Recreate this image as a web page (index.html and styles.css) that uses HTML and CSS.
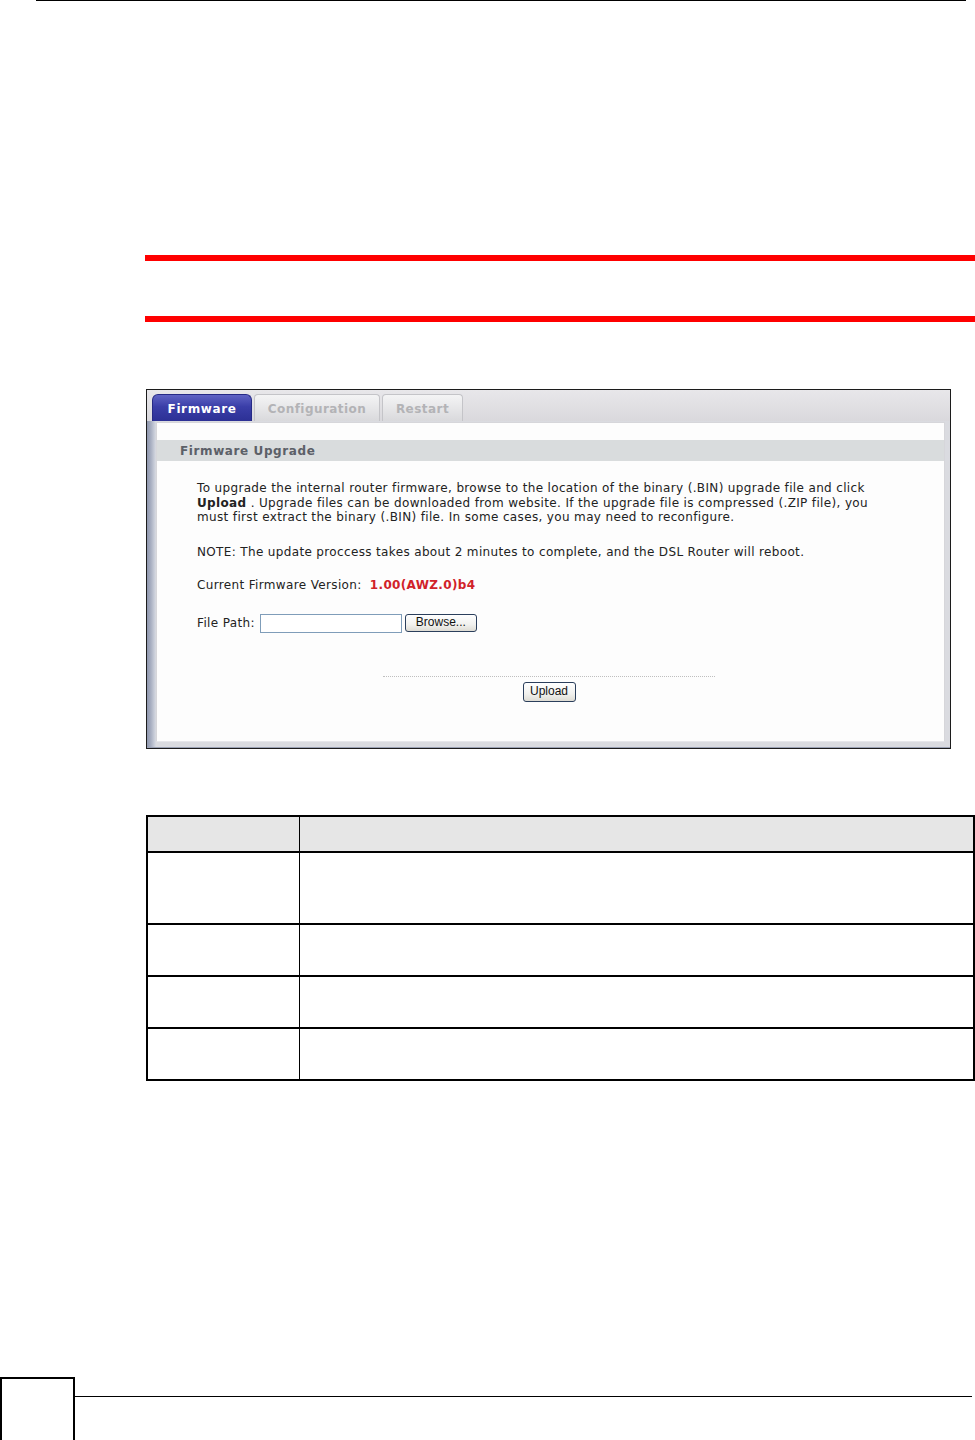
FILE: index.html
```html
<!DOCTYPE html>
<html>
<head>
<meta charset="utf-8">
<title>Firmware Upgrade</title>
<link rel="stylesheet" href="styles.css">
</head>
<body>
<div class="top-rule"></div>

<div class="note"></div>

<div class="shot">
  <div class="tabs">
    <span class="tab tab-on">Firmware</span>
    <span class="tab tab-conf">Configuration</span>
    <span class="tab tab-rest">Restart</span>
  </div>
  <div class="frame">
    <div class="pane">
      <div class="pane-title">Firmware Upgrade</div>
      <div class="pane-body">
        <p class="intro">To upgrade the internal router firmware, browse to the location of the binary (.BIN) upgrade file and click<br>
        <b>Upload</b> . Upgrade files can be downloaded from website. If the upgrade file is compressed (.ZIP file), you<br>
        must first extract the binary (.BIN) file. In some cases, you may need to reconfigure.</p>
        <p class="notice">NOTE: The update proccess takes about 2 minutes to complete, and the DSL Router will reboot.</p>
        <p class="version">Current Firmware Version: <span class="ver">1.00(AWZ.0)b4</span></p>
        <div class="file-row">
          <span>File Path:</span>
          <span class="file-input"></span>
          <span class="btn btn-browse">Browse...</span>
        </div>
        <div class="actions">
          <span class="btn btn-upload">Upload</span>
        </div>
      </div>
    </div>
  </div>
</div>

<table class="fields">
<tr class="head"><td class="label"></td><td></td></tr>
<tr class="tall"><td class="label"></td><td></td></tr>
<tr><td class="label"></td><td></td></tr>
<tr><td class="label"></td><td></td></tr>
<tr><td class="label"></td><td></td></tr>
</table>

<div class="footer">
  <div class="page-box"></div>
  <div class="footer-rule"></div>
</div>
</body>
</html>
```

FILE: styles.css
```css
/* Manual page: firmware upgrade screen */

body
{ margin: 0;
  background: #ffffff;
  font-family: "DejaVu Sans", Verdana, sans-serif;
  color: #222222;
}

div.top-rule
{ margin-left: 36px;
  width: 930px;
  border-top: 1px solid #000000;
}

div.note
{ margin-top: 254px;
  margin-left: 145px;
  height: 55px;
  border-top: 6px solid #ff0000;
  border-bottom: 6px solid #ff0000;
}

/* Screenshot panel */

div.shot
{ margin-top: 67px;
  margin-left: 146px;
  width: 803px;
  border: 1px solid #1c1c1c;
  background: linear-gradient(#e8e7ea, #d9d8dc 32px, #d4d5da);
}

div.tabs
{ display: flex;
  gap: 2px;
  padding: 4px 0 0 5px;
  height: 27px;
}

span.tab
{ box-sizing: border-box;
  height: 27px;
  padding-top: 7px;
  text-align: center;
  font-size: 12px;
  font-weight: bold;
  letter-spacing: 0.45px;
  color: #b3b3b6;
  border: 1px solid #c4c4c8;
  border-bottom: none;
  border-radius: 4px 4px 0 0;
  background: linear-gradient(#f4f4f5, #e4e4e6 60%, #d9d9dc);
}

span.tab-on
{ width: 100px;
  color: #ffffff;
  letter-spacing: 0.6px;
  border-color: #262a86;
  border-radius: 6px 6px 0 0;
  background: linear-gradient(#5f63c4, #3a3ea8 45%, #2c3095);
}

span.tab-conf
{ width: 126px;
}

span.tab-rest
{ width: 81px;
}

div.frame
{ padding: 1px 5px 5px 9px;
  background: linear-gradient(to right, #8e96ad, #a9b0c2 4px, #cfd3dd 8px, #dadbe0 9px);
  border-bottom: 1px solid #9aa1b4;
}

div.pane
{ height: 318px;
  background: #fdfdfd;
  border: 1px solid #d6d6da;
  border-bottom-color: #e6e6ea;
}

div.pane-title
{ margin-top: 17px;
  height: 19px;
  padding-top: 2px;
  line-height: 19px;
  padding-left: 23px;
  background: #d9dcdd;
  font-size: 12px;
  font-weight: bold;
  letter-spacing: 0.6px;
  color: #5c6068;
}

div.pane-body
{ padding-left: 40px;
  font-size: 12px;
  letter-spacing: 0.35px;
}

div.pane-body p
{ margin: 0;
  line-height: 14.5px;
}

p.intro
{ padding-top: 20px;
}

p.notice
{ margin-top: 20px !important;
}

p.version
{ margin-top: 19px !important;
}

span.ver
{ margin-left: 4px;
  font-weight: bold;
  color: #d12229;
}

div.file-row
{ display: flex;
  align-items: center;
  margin-top: 21px;
  height: 19px;
}

span.file-input
{ box-sizing: border-box;
  width: 142px;
  height: 19px;
  margin: 0 3px 0 5px;
  border: 1px solid #7f9db9;
  background: #ffffff;
}

span.btn
{ box-sizing: border-box;
  display: inline-block;
  height: 18px;
  line-height: 15px;
  text-align: center;
  font-family: "Liberation Sans", Arial, sans-serif;
  font-size: 12px;
  letter-spacing: 0;
  color: #111111;
  border: 1px solid #2b3f5c;
  border-radius: 3px;
  background: linear-gradient(#ffffff, #f1f1ee 60%, #dedcd4);
}

span.btn-browse
{ width: 72px;
}

div.actions
{ margin: 43px 0 0 186px;
  width: 332px;
  border-top: 1px dotted #bfbfbf;
  padding-top: 5px;
  text-align: center;
}

span.btn-upload
{ width: 53px;
  height: 20px;
  line-height: 17px;
}

/* Field description table */

table.fields
{ margin-top: 66px;
  margin-left: 146px;
  width: 829px;
  border-collapse: collapse;
  border: 2px solid #000000;
}

table.fields td
{ height: 50px;
  padding: 0;
  border-top: 2px solid #000000;
}

table.fields td.label
{ width: 151px;
  border-right: 1px solid #000000;
}

table.fields tr.head td
{ height: 34px;
  background: #e6e6e6;
}

table.fields tr.tall td
{ height: 70px;
}

/* Page footer */

div.footer
{ margin-top: 296px;
  display: flex;
  align-items: flex-start;
}

div.page-box
{ width: 71px;
  height: 62px;
  border: 2px solid #000000;
}

div.footer-rule
{ margin-top: 19px;
  width: 897px;
  border-top: 1px solid #000000;
}
```
